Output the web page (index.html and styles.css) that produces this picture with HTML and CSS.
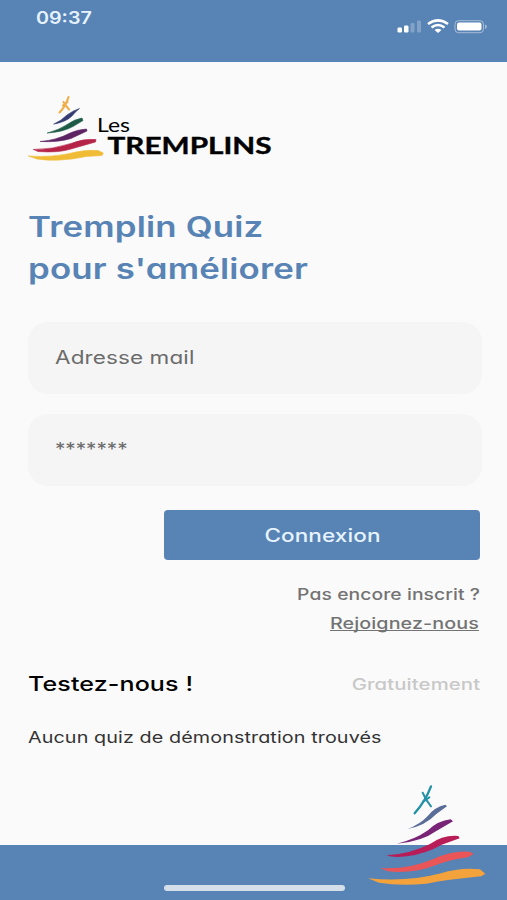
FILE: index.html
```html
<!DOCTYPE html>
<html lang="fr">
<head>
<meta charset="utf-8">
<title>Tremplin Quiz</title>
<link rel="stylesheet" href="styles.css">
</head>
<body>
<header class="status">
  <span class="t time">09:37</span>
  <svg class="indicators" width="94" height="18" viewBox="0 0 94 18">
    <g fill="#fff">
      <rect x="0.500" y="9.500" width="4.500" height="5" rx="1.300"/>
      <rect x="7" y="7.500" width="4.500" height="7" rx="1.300"/>
      <g opacity=".25"><rect x="13.500" y="5" width="4" height="9.500" rx="1"/><rect x="20" y="2.500" width="4" height="12" rx="1"/></g>
      <rect x="60" y="4.500" width="24.500" height="8" rx="2"/>
    </g>
    <g fill="none" stroke="#fff" stroke-width="2.500">
      <path d="M31 6Q41 -1.300 51 6"/>
      <path d="M34.500 9.500Q41 4.400 47.500 9.500"/>
    </g>
    <path d="M37.500 12Q41 9.300 44.500 12L41 15Z" fill="#fff"/>
    <rect x="58" y="2.700" width="28.500" height="12" rx="3.500" fill="none" stroke="#fff" stroke-opacity=".45"/>
    <path d="M88 6.500v4.500q2-.8 2-2.250t-2-2.250" fill="#fff" opacity=".45"/>
  </svg>
</header>
<main class="page">
  <svg class="logo" width="250" height="72" viewBox="0 0 250 72">
    <g stroke-linecap="round" stroke-linejoin="round" stroke-width=".6">
      <path d="M40.500 3Q38 12 31.500 18.500M35.500 8Q38 12 41 15.500M35 11.500L39.500 8" fill="none" stroke="#efae48" stroke-width="2.100"/>
      <path d="M26 30Q38 28 44 22Q47 18 51.500 14.500Q44 17 39 21Q33 27 26 30" fill="#353c72" stroke="#353c72"/>
      <path d="M19.500 39Q35 38 45 32.500L55 26.500L54 24Q46 25.500 40 30Q31 36 19.500 39" fill="#1f5c48" stroke="#1f5c48"/>
      <path d="M12.500 47.500Q30 48.500 43 44.500L59 37L58.500 35Q49 35.500 41 39.500Q29 46 12.500 47.500" fill="#5d2463" stroke="#5d2463"/>
      <path d="M5.500 55.500L10 57.500Q30 59 43 55L67.500 48L68 45.500Q55 44.500 43 49.500Q25 55.500 5.500 55.500" fill="#b52348" stroke="#b52348"/>
      <path d="M.5 62L9 65Q20 66.800 32 66Q45 65.500 58 62.500L74 61.500L75.300 59L70 56.500Q59 55.500 48 58Q25 64 .5 62" fill="#f0bb35" stroke="#f0bb35"/>
    </g>
    <text class="logo-les" x="69" y="37.500" textLength="33" lengthAdjust="spacingAndGlyphs">Les</text>
    <text class="logo-name" x="79.500" y="60" textLength="164" lengthAdjust="spacingAndGlyphs">TREMPLINS</text>
  </svg>
  <h1 class="title"><span class="t l1">Tremplin Quiz</span><span class="t l2">pour s'améliorer</span></h1>
  <form class="login">
    <div class="field"><span class="t mail">Adresse mail</span></div>
    <div class="field"><span class="t pass">*******</span></div>
    <button class="submit" type="button"><span class="t go">Connexion</span></button>
  </form>
  <div class="signup"><span class="t ask">Pas encore inscrit ?</span><a class="t join">Rejoignez-nous</a></div>
  <div class="demo"><h2 class="t try">Testez-nous !</h2><span class="t free">Gratuitement</span></div>
  <p class="t empty">Aucun quiz de démonstration trouvés</p>
</main>
<footer class="bottom">
  <div class="home"></div>
  <svg class="emblem" width="122" height="106" viewBox="18 24 366 318">
    <g fill="none" stroke="#2391a5" stroke-linecap="round">
      <path d="M213 34Q197 77 164 115" stroke-width="7"/>
      <path d="M188 53Q197 76 213 94M190 79L208 67" stroke-width="6"/>
    </g>
    <g stroke-linejoin="round" stroke-width="2">
      <path d="M142 162Q195 153 229 117L261 94L256 89Q224 96 204 122Q180 148 142 162" fill="#5a6c98"/>
      <path d="M111 206Q185 200 229 168L279 139L272 133Q234 137 204 166Q164 194 111 206" fill="#792477"/>
      <path d="M79 241Q100 249 140 244Q201 235 245 209L299 190L295 183Q250 179 210 207Q151 237 79 241" fill="#b81d57"/>
      <path d="M60 279L84 289Q158 296 220 273Q276 252 324 247L341 237L329 230Q278 226 222 251Q145 284 60 279" fill="#ea5557"/>
      <path d="M24 310L57 323Q120 334 199 326Q274 313 309 310L364 304L376 296L360 283Q300 277 243 295Q140 322 24 310" fill="#f3a23c"/>
    </g>
  </svg>
</footer>
</body>
</html>
```
FILE: styles.css
```css
* { box-sizing: border-box; margin: 0; }
body { height: 900px; display: flex; flex-direction: column; background: #fafafa; font-family: Inter, sans-serif; font-feature-settings: "cv11"; overflow: hidden; }
.status { height: 61.5px; background: #5883b5; display: flex; justify-content: space-between; padding: 9px 16px 0 36px; }

/* Wide lettering: each label is stretched from its aligned edge */
.t { white-space: nowrap; width: max-content; display: block; transform-origin: left center; letter-spacing: .005em; }
.time { font-size: 17px; font-weight: 600; color: #e6f3ff; line-height: 19px; letter-spacing: 0; transform: scaleX(1.16); }
.indicators { margin-top: 9px; }
.page { flex: 1; padding: 32px 25px 0 28px; }
.logo { display: block; }
.logo-les { font: 19px Lato, sans-serif; }
.logo-name { font: 700 23.5px Lato, sans-serif; stroke: #000; stroke-width: .4px; }
.title { margin-top: 40px; font-size: 28px; font-weight: 600; line-height: 42px; color: #5883b5; }
.l1, .l2 { transform: scaleX(1.244); }
.login { margin-top: 32px; display: flex; flex-direction: column; }
.field { height: 72px; border-radius: 20px; background: #f5f5f5; padding: 0 27px; display: flex; align-items: center; margin-bottom: 20px; color: #6b6b6b; font-size: 18px; }
.mail { transform: scaleX(1.25); }
.pass { letter-spacing: 0; transform: scaleX(1.15); }
.submit { align-self: flex-end; margin: 4px 2px 0 0; width: 316px; height: 50px; border: 0; border-radius: 4px; background: #5883b5; color: #e6f3ff; font: 500 18px Inter, sans-serif; font-feature-settings: inherit; display: flex; justify-content: center; align-items: center; }
.go { transform-origin: center; transform: translateY(1px) scaleX(1.25); }
.signup { margin: 20px 2px 0 0; display: flex; flex-direction: column; align-items: flex-end; font-size: 16px; font-weight: 500; line-height: 29px; color: #737373; }
.signup .t, .free { transform-origin: right center; }
.ask { transform: scaleX(1.203); }
.join { text-decoration: underline; text-decoration-thickness: 1px; text-decoration-skip-ink: none; margin-right: 1px; transform: scaleX(1.232); }
.demo { margin: 31px 2px 0 0; display: flex; justify-content: space-between; line-height: 30px; }
.try { font-size: 20px; font-weight: 500; transform: scaleX(1.25); }
.free { font-size: 16px; font-weight: 500; color: #c8c8c8; transform: scaleX(1.27); }
.empty { font-size: 16px; line-height: 30px; margin-top: 23px; color: #333; transform: scaleX(1.234); }
.bottom { position: relative; height: 55px; background: #5883b5; display: flex; justify-content: center; padding: 40px 0 0 1px; }
.home { width: 181px; height: 6px; border-radius: 3px; background: #d5dfea; }
.emblem { position: absolute; right: 19px; bottom: 11px; }
```
